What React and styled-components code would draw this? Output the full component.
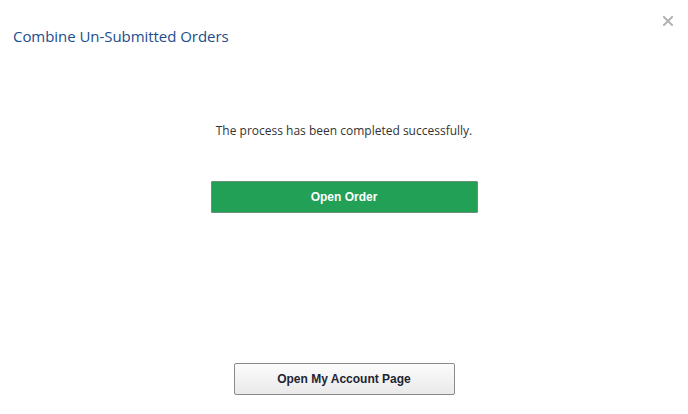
import React from "react";
import styled, { createGlobalStyle } from "styled-components";

const Global = createGlobalStyle`
  html, body { margin: 0; padding: 0; background: #fff; }
  body { width: 688px; height: 414px; overflow: hidden; }
`;

const Modal = styled.div`
  position: relative;
  width: 688px;
  height: 414px;
  display: flex;
  flex-direction: column;
  box-sizing: border-box;
  font-family: "Open Sans", "Noto Sans", sans-serif;
`;

const Header = styled.div`
  padding: 26px 13px 0 13px;
  height: 50px;
  box-sizing: border-box;
`;

const Title = styled.h1`
  margin: 0;
  font-size: 15px;
  font-weight: 400;
  color: #1b4d8c;
  line-height: 20px;
  letter-spacing: -0.05px;
`;

const Close = styled.button`
  position: absolute;
  top: 14px;
  right: 13px;
  width: 14px;
  height: 14px;
  padding: 0;
  border: 0;
  background: none;
  cursor: pointer;
  display: flex;
  align-items: center;
  justify-content: center;
`;

const Body = styled.div`
  flex: 1;
  display: flex;
  flex-direction: column;
  align-items: center;
  padding-top: 72px;
`;

const Message = styled.p`
  margin: 0;
  font-size: 12px;
  color: #333;
  line-height: 18px;
`;

const BaseButton = styled.button`
  font-family: "Liberation Sans", Arial, sans-serif;
  font-weight: 700;
  font-size: 12px;
  box-sizing: border-box;
  cursor: pointer;
`;

const PrimaryButton = styled(BaseButton)`
  margin-top: 41px;
  width: 267px;
  height: 32px;
  background: #22a055;
  color: #fff;
  border: 1px solid #6b8f78;
  border-radius: 1px;
`;

const Footer = styled.div`
  display: flex;
  justify-content: center;
  padding-bottom: 19px;
`;

const SecondaryButton = styled(BaseButton)`
  width: 221px;
  height: 32px;
  color: #1d2433;
  background: linear-gradient(#fcfcfc, #e9e9e9);
  border: 1px solid #8a8a8a;
  border-radius: 2px;
`;

export default function App() {
  return (
    <>
      <Global />
      <Modal>
        <Header>
          <Title>Combine Un-Submitted Orders</Title>
        </Header>
        <Close aria-label="Close">
          <svg width="10" height="10" viewBox="0 0 10 10">
            <path d="M1 1 L9 9 M9 1 L1 9" stroke="#b3b3b3" strokeWidth="2" strokeLinecap="square" />
          </svg>
        </Close>
        <Body>
          <Message>The process has been completed successfully.</Message>
          <PrimaryButton>Open Order</PrimaryButton>
        </Body>
        <Footer>
          <SecondaryButton>Open My Account Page</SecondaryButton>
        </Footer>
      </Modal>
    </>
  );
}
